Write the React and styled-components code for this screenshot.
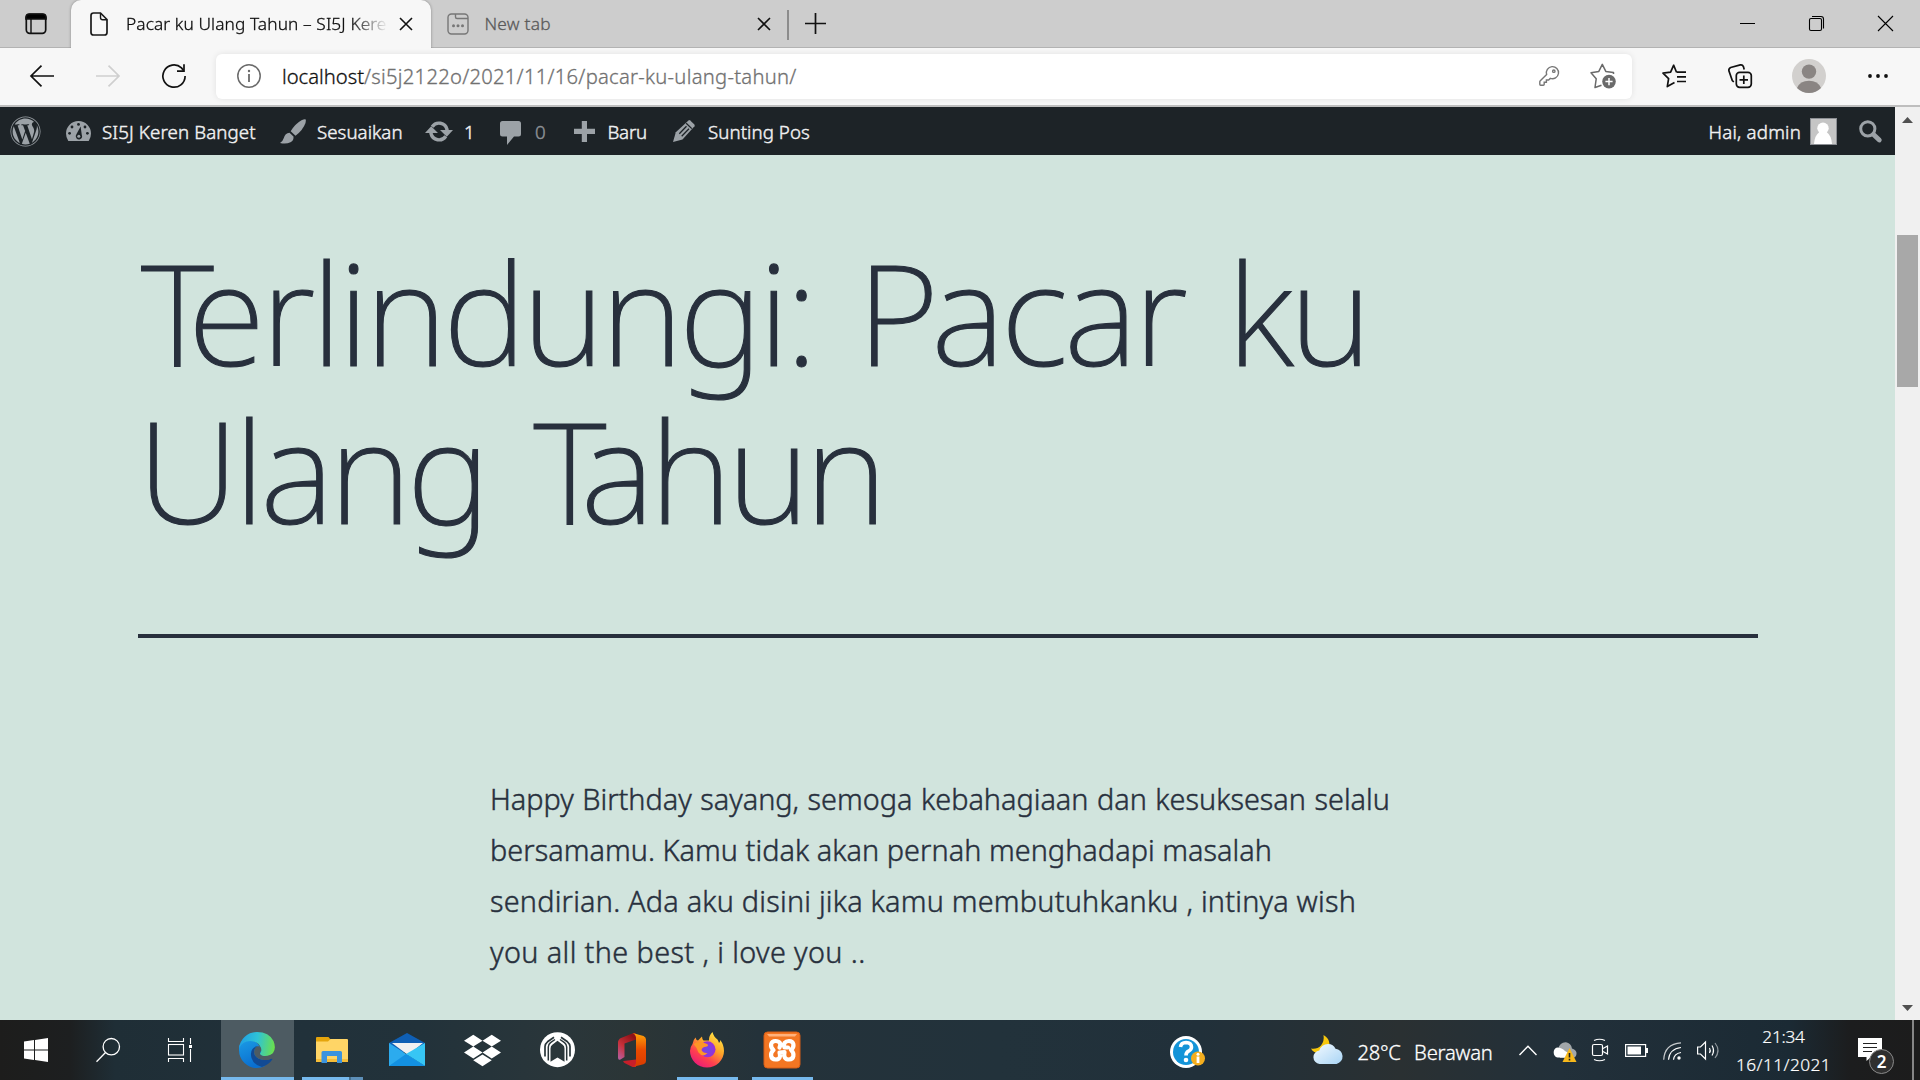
import React from "react";
import styled, { createGlobalStyle } from "styled-components";
import { FaWordpress, FaDropbox } from "react-icons/fa";

const Global = createGlobalStyle`
  * { box-sizing: border-box; }
  html, body { margin: 0; padding: 0; overflow: hidden; }
  body { font-family: "Noto Sans", "Open Sans", sans-serif; font-weight: 300; }
  svg { display: block; flex: none; overflow: visible; }
`;

const Screen = styled.div`
  width: 1920px;
  height: 1080px;
  display: flex;
  flex-direction: column;
  background: #d1e4dd;
`;

const Text = styled.span`
  font-size: ${(p) => p.$size || 17.3}px;
  letter-spacing: ${(p) => p.$ls || 0}px;
  color: ${(p) => p.$color || "inherit"};
  -webkit-text-stroke: ${(p) => p.$stroke ?? 0.3}px currentColor;
  white-space: pre;
`;

/* ---------- browser tabs ---------- */
const TabStrip = styled.div`
  height: 48px;
  display: flex;
  background: #cdcdcd;
  box-shadow: inset 0 -1px 0 #b3b3b3;
`;
const TabActions = styled.div`
  width: 71px;
  padding: 13px 0 0 25px;
`;
const Tab = styled.div`
  width: ${(p) => p.$width}px;
  height: 48px;
  display: flex;
  align-items: center;
  padding: 0 ${(p) => p.$right}px 1px ${(p) => p.$left}px;
  color: ${(p) => (p.$active ? "#0c0c0c" : "#5a5a5a")};
  background: ${(p) => (p.$active ? "#f7f7f7" : "transparent")};
  border-radius: 10px 10px 0 0;
  box-shadow: ${(p) => (p.$active ? "0 0 3px rgba(0,0,0,.35)" : "none")};
`;
const TabTitle = styled.div`
  flex: 1;
  display: flex;
  overflow: hidden;
  margin: 0 14px 0 ${(p) => p.$gap}px;
  mask-image: ${(p) => (p.$fade ? "linear-gradient(90deg, #000 225px, transparent 262px)" : "none")};
`;
const TabDivider = styled.div`
  width: 2px;
  height: 30px;
  margin-top: 10px;
  background: #8c8c8c;
`;
const NewTabButton = styled.div`
  padding: 13px 0 0 16px;
`;
const WindowButtons = styled.div`
  display: flex;
  margin-left: auto;
`;
const WindowButton = styled.div`
  width: 69px;
  height: 47px;
  display: grid;
  place-items: center;
`;

/* ---------- toolbar ---------- */
const Toolbar = styled.div`
  height: 59px;
  display: flex;
  align-items: center;
  padding: 0 9px 2px;
  background: #f7f7f7;
  border-bottom: 2px solid #bebebe;
`;
const ToolSlot = styled.div`
  width: ${(p) => p.$width || 66}px;
  display: grid;
  place-items: center;
`;
const AddressBar = styled.div`
  width: 1416px;
  height: 45px;
  margin: 1px 9px 0;
  display: flex;
  align-items: center;
  padding: 0 16px 0 21px;
  background: #fff;
  border-radius: 6px;
  box-shadow: 0 0 6px rgba(0, 0, 0, 0.09);
`;
const Url = styled.div`
  display: flex;
  margin: 0 auto 0 21px;
`;
const AddressActions = styled.div`
  display: flex;
  align-items: center;
  gap: 31px;
`;

/* ---------- page ---------- */
const Viewport = styled.div`
  height: 913px;
  display: flex;
`;
const Page = styled.div`
  width: 1895px;
  background: #d1e4dd;
`;
const AdminBar = styled.div`
  height: 48px;
  display: flex;
  align-items: center;
  background: #1d2327;
  color: #f0f0f1;
`;
const AdminItem = styled.div`
  width: ${(p) => p.$width}px;
  display: flex;
  align-items: center;
`;
const AdminIcon = styled.div`
  width: ${(p) => p.$width}px;
  display: flex;
  padding: ${(p) => p.$drop || 0}px 0 0 ${(p) => p.$indent || 0}px;
  color: #9ca2a7;
`;
const AdminRight = styled.div`
  display: flex;
  align-items: center;
  margin-left: auto;
`;
const Avatar = styled.div`
  width: 58px;
  padding-left: 9px;
`;
const Article = styled.article`
  width: 1620px;
  margin: 0 auto;
  padding-top: 77px;
  color: #28303d;
`;
const Title = styled.h1`
  margin: 0;
  height: 402px;
  font-size: 141px;
  line-height: 158.4px;
  font-weight: 200;
  -webkit-text-stroke: 1.1px #28303d;
`;
const TitleLine = styled.span`
  display: block;
  white-space: nowrap;
  letter-spacing: ${(p) => p.$ls}px;
  word-spacing: ${(p) => p.$ws}px;
  margin-left: ${(p) => p.$shift}px;
`;
const Kern = styled.span`
  letter-spacing: ${(p) => p.$ls}px;
`;
const Rule = styled.hr`
  height: 4px;
  margin: 0;
  border: 0;
  background: #28303d;
`;
const Paragraph = styled.p`
  width: 915px;
  margin: 135px auto 0;
  font-size: 28.8px;
  line-height: 51px;
  -webkit-text-stroke: 0.45px #28303d;
`;
const ParagraphLine = styled.span`
  display: block;
  white-space: nowrap;
  letter-spacing: ${(p) => p.$ls}px;
  word-spacing: ${(p) => p.$ws || 0}px;
`;
const Scrollbar = styled.div`
  width: 25px;
  display: flex;
  flex-direction: column;
  align-items: center;
  padding: 10px 0 9px;
  background: #f0f0f0;
`;
const Thumb = styled.div`
  width: 21px;
  height: 152px;
  margin: 112px 0 auto;
  background: #a8a8a8;
`;

/* ---------- taskbar ---------- */
const Taskbar = styled.div`
  height: 60px;
  display: flex;
  color: #fff;
  background: linear-gradient(90deg, #1d1d1c 0, #1d1f20 70px, #1f2e36 115px, #21313a 300px, #22323a 420px, #2a363a 560px, #2b3536 640px, #24323a 760px, #22323b 1000px, #21303a 1200px, #2a3032 1400px, #22303a 1560px, #1b2a34 1790px, #1c1d1e 1850px, #1c1c1c 100%);
`;
const SystemSlot = styled.div`
  width: 72px;
  display: grid;
  place-items: center;
`;
const Apps = styled.div`
  display: flex;
  margin-left: 3.5px;
`;
const AppSlot = styled.div`
  width: 75px;
  height: 60px;
  padding: 0 1px;
`;
const AppFace = styled.div`
  height: 60px;
  padding-top: 12px;
  display: flex;
  flex-direction: column;
  align-items: center;
  background: ${(p) => (p.$active ? "#4d5b62" : "transparent")};
`;
const Underline = styled.div`
  width: ${(p) => p.$width}px;
  height: 3px;
  margin-top: 9px;
  background: ${(p) => (p.$stack ? "linear-gradient(90deg,#76b9ed 47px,#46708f 47px,#46708f 49px,#5d8fb8 49px)" : "#76b9ed")};
`;
const Tray = styled.div`
  display: flex;
  margin-left: auto;
  align-items: center;
`;
const TrayHelp = styled.div`
  padding: 4px 105px 0 0;
`;
const Weather = styled.div`
  width: 200px;
  display: flex;
  align-items: center;
  gap: 13.5px;
  padding-top: 3px;
`;
const WeatherIcon = styled.div`
  margin-top: -6px;
`;
const TraySlot = styled.div`
  width: 36px;
  display: grid;
  place-items: center;
  padding-top: ${(p) => p.$drop || 0}px;
`;
const Clock = styled.div`
  width: 115px;
  margin-right: -1px;
  display: flex;
  flex-direction: column;
  align-items: center;
  line-height: 28px;
  padding-top: 1px;
`;
const Notification = styled.div`
  position: relative;
  width: 72px;
  height: 60px;
  padding: 17px 0 0 18px;
`;
const Badge = styled.div`
  position: absolute;
  left: 29px;
  top: 29px;
  width: 25px;
  height: 25px;
  display: grid;
  place-items: center;
  border-radius: 50%;
  border: 1.5px solid #8a8a8a;
  background: #2f2f2f;
  font-size: 17px;
  font-weight: 600;
  line-height: 20px;
`;
const ShowDesktop = styled.div`
  width: 8px;
  height: 60px;
  border-left: 2px solid #868686;
`;

const Svg = ({ w, h, vb, children, ...rest }) => (
  <svg width={w} height={h} viewBox={vb || `0 0 ${w} ${h}`} fill="none" stroke="none" {...rest}>
    {children}
  </svg>
);

const Close = ({ size = 12, width = 1.6, color = "#111" }) => (
  <Svg w={size} h={size} vb="0 0 12 12" stroke={color} strokeWidth={width}>
    <path d="M0 0L12 12M12 0L0 12" />
  </Svg>
);

function Tabs() {
  return (
    <TabStrip>
      <TabActions>
        <Svg w={22} h={22} stroke="#111" strokeWidth="1.7">
          <rect x="1.3" y="1.3" width="19.4" height="19" rx="3.5" />
          <path d="M1 4.5Q1 1 4.5 1H17.5Q21 1 21 4.5V6H1Z" fill="#000" />
          <path d="M6 6V20" strokeWidth="1.4" />
        </Svg>
      </TabActions>
      <Tab $active $width={360} $left={19} $right={19}>
        <Svg w={18} h={24} stroke="#1a1a1a" strokeWidth="1.7">
          <path d="M3.5 1H10.5L17 7.5V20.5Q17 23 14.5 23H3.5Q1 23 1 20.5V3.5Q1 1 3.5 1Z" />
          <path d="M10.5 1V5.5Q10.5 7.7 12.7 7.7H17" strokeWidth="1.4" />
        </Svg>
        <TabTitle $gap={18} $fade>
          <Text $ls={0.1}>Pacar ku Ulang Tahun – SI5J Kere</Text>
        </TabTitle>
        <Close />
      </Tab>
      <Tab $width={356} $left={16} $right={17}>
        <Svg w={22} h={22} stroke="#777" strokeWidth="1.4">
          <rect x="1" y="1" width="20" height="20" rx="3.5" />
          <path d="M8.5 1V4Q8.5 5.5 10 5.5H21" />
          <g fill="#777" stroke="none">
            <circle cx="6.5" cy="12.7" r="1.5" />
            <circle cx="11" cy="12.7" r="1.5" />
            <circle cx="15.5" cy="12.7" r="1.5" />
          </g>
        </Svg>
        <TabTitle $gap={15.5}>
          <Text $ls={0.26}>New tab</Text>
        </TabTitle>
        <Close />
      </Tab>
      <TabDivider />
      <NewTabButton>
        <Svg w={21} h={21} stroke="#111" strokeWidth="1.7">
          <path d="M10.5 0V21M0 10.5H21" />
        </Svg>
      </NewTabButton>
      <WindowButtons>
        <WindowButton>
          <Svg w={15} h={15} stroke="#000" strokeWidth="1">
            <path d="M0 7.5H15" />
          </Svg>
        </WindowButton>
        <WindowButton>
          <Svg w={15} h={15} stroke="#000" strokeWidth="1.1">
            <rect x=".5" y="2.5" width="12" height="12" rx="1.5" />
            <path d="M3 .5H12Q14.5 .5 14.5 3V12.5" />
          </Svg>
        </WindowButton>
        <WindowButton>
          <Close size={15} width={0.9} color="#000" />
        </WindowButton>
      </WindowButtons>
    </TabStrip>
  );
}

function BrowserToolbar() {
  return (
    <Toolbar>
      <ToolSlot>
        <Svg w={24} h={22} stroke="#111" strokeWidth="1.7">
          <path d="M24 11H1M11.5 .7L1 11L11.5 21.3" />
        </Svg>
      </ToolSlot>
      <ToolSlot>
        <Svg w={24} h={22} stroke="#cfcfcf" strokeWidth="1.7">
          <path d="M0 11H23M12.5 .7L23 11L12.5 21.3" />
        </Svg>
      </ToolSlot>
      <ToolSlot>
        <Svg w={24} h={24} stroke="#111" strokeWidth="1.7">
          <path d="M23.1 12A11.1 11.1 0 1 1 19.5 3.900L21.500 6.500" />
          <path d="M22 .2V7.2H15" />
        </Svg>
      </ToolSlot>
      <AddressBar>
        <Svg w={24} h={24} stroke="#6a6a6a" strokeWidth="1.5">
          <circle cx="12" cy="12" r="11.2" />
          <path d="M12 10V18" strokeWidth="1.8" />
          <circle cx="12" cy="7" r="1.2" fill="#6a6a6a" stroke="none" />
        </Svg>
        <Url>
          <Text $size={20.2} $color="#111">localhost</Text>
          <Text $size={20.2} $ls={0.27} $color="#717171">/si5j2122o/2021/11/16/pacar-ku-ulang-tahun/</Text>
        </Url>
        <AddressActions>
          <Svg w={20} h={20} stroke="#767676" strokeWidth="1.4">
            <path d="M7.6 8.5A6.1 6.1 0 1 1 11.3 12.4L9.6 14H7.4V16.3H5.2V18.3Q5.2 19.2 4.3 19.2H1.6Q.8 19.2 .8 18.3V15.8Q.8 15.2 1.3 14.7Z" />
            <circle cx="14.8" cy="5.2" r="1.2" />
          </Svg>
          <Svg w={26} h={26} stroke="#6a6a6a" strokeWidth="1.5" strokeLinejoin="round">
            <path d="M11.5 22.2L5 24.5L6.2 15.8L1 9.8L8.8 8.4L12.3 1.3L15.8 8.4L23.5 9.6V11" />
            <circle cx="19" cy="18.6" r="6.8" fill="#6a6a6a" stroke="none" />
            <path d="M19 15V22.2M15.4 18.6H22.6" stroke="#fff" />
          </Svg>
        </AddressActions>
      </AddressBar>
      <ToolSlot>
        <Svg w={24} h={24} stroke="#111" strokeWidth="1.7" strokeLinejoin="round">
          <path d="M14.5 8.2L11.7 1.2L8.6 8.2L1 9.2L6.6 14.6L5.3 22.6L12.5 18.6" />
          <path d="M14.5 8.2H24M15 12.8H24M15 17.5H24" />
        </Svg>
      </ToolSlot>
      <ToolSlot>
        <Svg w={24} h={24} stroke="#111" strokeWidth="1.7">
          <rect x="8.3" y="8.3" width="15" height="15" rx="3.3" />
          <path d="M15.8 11.5V20M11.5 15.8H20" />
          <path d="M5.8 18L4.3 16.5L.9 6.8Q.5 4.4 2.7 3.5L12.3 .9Q14.6 .5 15.4 2.6L16.2 5.4" />
        </Svg>
      </ToolSlot>
      <ToolSlot $width={72}>
        <Svg w={34} h={34}>
          <circle cx="17" cy="17" r="17" fill="#d2d0ce" />
          <circle cx="17" cy="12.6" r="7.2" fill="#8a8583" />
          <path d="M5 29Q8 21.7 17 21.7T29 29A17 17 0 0 1 5 29Z" fill="#8a8583" />
        </Svg>
      </ToolSlot>
      <ToolSlot>
        <Svg w={20} h={4}>
          <circle cx="2" cy="2" r="1.9" fill="#111" />
          <circle cx="10" cy="2" r="1.9" fill="#111" />
          <circle cx="18" cy="2" r="1.9" fill="#111" />
        </Svg>
      </ToolSlot>
    </Toolbar>
  );
}

const adminText = { $size: 18.7, $stroke: 0.45 };

function WpAdminBar() {
  return (
    <AdminBar>
      <AdminItem $width={66}>
        <AdminIcon $width={66} $indent={10}>
          <FaWordpress size={31} />
        </AdminIcon>
      </AdminItem>
      <AdminItem $width={214}>
        <AdminIcon $width={36}>
          <Svg w={25} h={20}>
            <path fill="currentColor" d="M12.5 0A12.4 12.4 0 0 0 0 12.5Q0 16.7 2.3 20H22.7Q25 16.7 25 12.5A12.4 12.4 0 0 0 12.5 0Z" />
            <g fill="#1d2327">
              <circle cx="12.5" cy="3.4" r="1.4" />
              <circle cx="6" cy="6" r="1.4" />
              <circle cx="19" cy="6" r="1.4" />
              <circle cx="3.6" cy="12.3" r="1.4" />
              <circle cx="21.4" cy="12.3" r="1.4" />
              <path d="M14.6 5.5L15.8 14A3.2 3.2 0 1 1 10.4 13.2Z" />
            </g>
            <circle cx="12.8" cy="15.3" r="1.5" fill="currentColor" />
          </Svg>
        </AdminIcon>
        <Text {...adminText} $ls={0.12}>SI5J Keren Banget</Text>
      </AdminItem>
      <AdminItem $width={145}>
        <AdminIcon $width={37}>
          <Svg w={26} h={25}>
            <path fill="currentColor" d="M25.5 .3Q26.3 1 25.5 4Q23 11 15.5 16.8L10.7 12.3Q15 5 21.5 1.3Q24.5 -.3 25.5 .3Z" />
            <path fill="currentColor" d="M9.5 13.7L13.5 17.5Q14 21.5 10.5 23.3Q6 25.5 0 24Q3 22 3.8 19Q5 14.3 9.5 13.7Z" />
          </Svg>
        </AdminIcon>
        <Text {...adminText} $ls={0.05}>Sesuaikan</Text>
      </AdminItem>
      <AdminItem $width={75}>
        <AdminIcon $width={39}>
          <Svg w={28} h={21} stroke="currentColor" strokeWidth="3.4">
            <path d="M7.2 5.8A8.2 8.2 0 0 1 22 8.5V10" />
            <path d="M20.8 15.2A8.2 8.2 0 0 1 6 12.5V11" />
            <path fill="currentColor" stroke="none" d="M15 9H28L21.8 15.8ZM0 12H13L6.2 5.2Z" />
          </Svg>
        </AdminIcon>
        <Text {...adminText}>1</Text>
      </AdminItem>
      <AdminItem $width={74}>
        <AdminIcon $width={35} $drop={4}>
          <Svg w={21} h={24}>
            <path fill="currentColor" d="M2.5 0H18.5Q21 0 21 2.5V13Q21 15.5 18.5 15.5H14L7 24V15.5H2.5Q0 15.5 0 13V2.5Q0 0 2.5 0Z" />
          </Svg>
        </AdminIcon>
        <Text {...adminText} $color="#8d9196">0</Text>
      </AdminItem>
      <AdminItem $width={99}>
        <AdminIcon $width={33.5}>
          <Svg w={21} h={21}>
            <path fill="currentColor" d="M7.8 0H13V7.8H21V13H13V21H7.8V13H0V7.8H7.8Z" />
          </Svg>
        </AdminIcon>
        <Text {...adminText} $ls={-0.2}>Baru</Text>
      </AdminItem>
      <AdminItem $width={140}>
        <AdminIcon $width={35}>
          <Svg w={22} h={22}>
            <path fill="currentColor" d="M15.5 .4Q16.3 -.2 17.2 .5L21.4 4.6Q22 5.4 21.5 6.3L9.5 19.4L0 22L2.8 12.3Z" />
            <path stroke="#1d2327" strokeWidth="1.3" d="M13.2 3.2L18.8 8.6M6.3 13.8L13.5 6.3M8.7 16.2L16 8.8" />
          </Svg>
        </AdminIcon>
        <Text {...adminText} $ls={0.06}>Sunting Pos</Text>
      </AdminItem>
      <AdminRight>
        <Text {...adminText} $ls={0.2}>Hai, admin</Text>
        <Avatar>
          <Svg w={27} h={27}>
            <rect x=".5" y=".5" width="26" height="26" fill="#c5c5c5" stroke="#8c8f94" />
            <circle cx="13" cy="10.3" r="5.7" fill="#fff" />
            <path fill="#fff" d="M9.5 14H16.5Q21.5 17.5 22 26H4Q4.5 17.5 9.5 14Z" />
          </Svg>
        </Avatar>
        <AdminItem $width={36}>
          <AdminIcon $width={24}>
            <Svg w={24} h={23} stroke="currentColor">
              <circle cx="8.8" cy="8.8" r="7.1" strokeWidth="3" />
              <path d="M14.5 14.5L20.3 20" strokeWidth="4.8" strokeLinecap="round" />
            </Svg>
          </AdminIcon>
        </AdminItem>
      </AdminRight>
    </AdminBar>
  );
}

const EdgeIcon = () => (
  <Svg w={36} h={36}>
    <defs>
      <linearGradient id="edgeTop" x1="0" y1=".4" x2="1" y2=".5">
        <stop offset="0" stopColor="#1f9fe6" />
        <stop offset=".5" stopColor="#2fc3d6" />
        <stop offset="1" stopColor="#6be04c" />
      </linearGradient>
      <linearGradient id="edgeBody" x1="0" y1="0" x2=".4" y2="1">
        <stop offset="0" stopColor="#1b9be5" />
        <stop offset="1" stopColor="#0a6fd0" />
      </linearGradient>
    </defs>
    <path fill="url(#edgeBody)" d="M0 16Q1 8 10 8Q19 8.500 21 16.500L26 34Q22 36 18 36A18 18 0 0 1 0 18Z" />
    <path fill="url(#edgeTop)" d="M0 16.500A18 18 0 0 1 18 0Q30 0 34.500 9Q37.500 16.500 34 21Q31 24.300 25 24Q20.500 23.500 21 21.500Q23 19.500 22 16Q19.500 9.500 11.500 9Q3 9 0 16.500Z" />
    <path fill="#114a94" d="M13.500 17Q11 20 12.500 26Q15 33.500 23 35Q30 32.500 33.300 27.500Q33.500 26.300 32.300 26.700Q28 28.800 23 27.800Q15.500 26 15 20Q15 16.500 18.500 14Q15.500 14.500 13.500 17Z" />
    <path fill="#4d5b62" d="M15 20Q15 15.500 19 14Q22.500 15.500 22 18.500Q20.300 21 21.500 22.700Q24 25 29 24L34 22L33 26.500Q28 28.800 23 27.800Q15.500 26 15 20Z" />
  </Svg>
);
const ExplorerIcon = () => (
  <Svg w={32} h={36}>
    <path fill="#e5a50c" d="M0 6Q0 5 1 5H12.500L15 8V12H0Z" />
    <path fill="#ffd566" d="M0 9.500H12L14.500 7H31Q32 7 32 8V30H0Z" />
    <path fill="#f6bd38" d="M0 27H32V30H0Z" />
    <path fill="#3b93de" d="M7 19H24.500Q26 19 26 20.500V31H21V24H11V31H5.500V20.500Q5.500 19 7 19Z" />
  </Svg>
);
const MailIcon = () => (
  <Svg w={36} h={36}>
    <path fill="#0f5fb4" d="M0 11L18 1L36 11V20H0Z" />
    <path fill="#f1f1f1" d="M3 11H34L19 23Z" />
    <path fill="#2cabee" d="M0 11L36 34H0Z" />
    <path fill="#37c6f4" d="M36 11L17 22L36 34Z" />
    <path fill="#1391e2" d="M0 34L17 22L36 34Z" />
  </Svg>
);
const HomeIcon = () => (
  <Svg w={35} h={36}>
    <circle cx="17.500" cy="17.700" r="17.500" fill="#fff" />
    <path stroke="#2a363a" strokeWidth="1.700" d="M14 5.200L7.500 9.800Q5 11.800 5 14.500V24.500M21 5.200L27.500 9.800Q30 11.800 30 14.500V24.500" />
    <path stroke="#2a363a" strokeWidth="1.500" d="M15 7.500L10.500 10.700Q8.300 12.500 8.300 15V28.500M20 7.500L24.500 10.700Q26.700 12.500 26.700 15V28.500" />
    <path fill="#2a363a" d="M17.500 8.800L22.700 12.700Q24.500 14 24.500 16.500V29.800L17.500 25.500L10.500 29.800V16.500Q10.500 14 12.300 12.700Z" />
  </Svg>
);
const OfficeIcon = () => (
  <Svg w={28} h={36}>
    <defs>
      <linearGradient id="offR" x1="0" y1="0" x2="0" y2="1">
        <stop offset="0" stopColor="#ffa50a" />
        <stop offset=".5" stopColor="#e94a00" />
        <stop offset="1" stopColor="#d83b01" />
      </linearGradient>
      <linearGradient id="offL" x1=".6" y1="0" x2="0" y2="1">
        <stop offset="0" stopColor="#8e1217" />
        <stop offset=".5" stopColor="#c83039" />
        <stop offset="1" stopColor="#b463a8" />
      </linearGradient>
    </defs>
    <path fill="url(#offL)" d="M15.500 1L3 6Q0 7.500 0 10.500V25.500Q0 28.500 2.500 27.500L6.500 25V11.500L18 7.500V1Z" />
    <path fill="#c71f2a" d="M5.500 29L18 27.500V35H14.500L6.500 31Q4.500 29.500 5.500 29Z" />
    <path fill="url(#offR)" d="M14.500 1L25.500 4Q28 5 28 7.500V29Q28 31.500 25.500 32.300L14.500 35Q18 33.500 18 30V5.500Q17.500 2 14.500 1Z" />
  </Svg>
);
const FirefoxIcon = () => (
  <Svg w={34} h={36}>
    <defs>
      <linearGradient id="ff" x1=".85" y1="0" x2=".2" y2="1">
        <stop offset="0" stopColor="#fff14a" />
        <stop offset=".4" stopColor="#ffa328" />
        <stop offset=".7" stopColor="#ff3f4f" />
        <stop offset="1" stopColor="#e5177f" />
      </linearGradient>
      <radialGradient id="ffGlobe">
        <stop offset="0" stopColor="#6a4be8" />
        <stop offset="1" stopColor="#9b2fd6" />
      </radialGradient>
    </defs>
    <path fill="url(#ff)" d="M2.500 12Q3 8 5.500 5.500Q6 8 8 8.500L12 4.500Q12 7 13.500 8.500H19Q18.500 4 22.500 0Q23.500 4.500 27.500 7.500Q28.500 9 29 11Q30.500 9.500 30.300 8Q34 13 34 19A17 16.500 0 0 1 0 19Q0 15 2.500 12Z" />
    <circle cx="17.500" cy="17.300" r="8" fill="url(#ffGlobe)" />
    <path fill="#ff9626" d="M3.500 12Q9 8 17 12Q19.500 13.500 16 14.800Q12 15 11.500 18Q13 21.500 17.500 21Q13 26 8.500 20.500Q7 15.500 3.500 12Z" />
  </Svg>
);
const XamppIcon = () => (
  <Svg w={36} h={36}>
    <rect width="36" height="36" rx="3.500" fill="#f37623" stroke="#d65c16" strokeWidth="1" />
    <path d="M3 2H33L31 4.500H5Z" fill="#ffb27d" />
    <path d="M15.500 15.500C17.500 11.500 15.500 9 11.500 9C6.500 9 5.500 14.500 9.500 18C5.500 21.500 6.500 27.300 11.500 27.500C15.500 27.500 17 25 15.500 20.500L20.500 20C19.500 25 21 27.500 25 27.500C30 27.300 31 21.500 27 18C31 14.500 30 9 25 9C21 9 19 11.500 20.500 15.500H24" stroke="#fff" strokeWidth="4.200" strokeLinecap="round" strokeLinejoin="round" />
  </Svg>
);

const apps = [
  { id: "edge", icon: <EdgeIcon />, active: true, line: 73 },
  { id: "explorer", icon: <ExplorerIcon />, line: 61, stack: true },
  { id: "mail", icon: <MailIcon /> },
  { id: "dropbox", icon: <FaDropbox size={37} color="#fff" /> },
  { id: "home", icon: <HomeIcon /> },
  { id: "office", icon: <OfficeIcon /> },
  { id: "firefox", icon: <FirefoxIcon />, line: 61 },
  { id: "xampp", icon: <XamppIcon />, line: 61 },
];

function WindowsTaskbar() {
  return (
    <Taskbar>
      <SystemSlot>
        <Svg w={24} h={24}>
          <path fill="#fff" d="M0 3.500L10 2V11.500H0ZM11 1.900L24 0V11.500H11ZM0 12.500H10V22L0 20.500ZM11 12.500H24V24L11 22.100Z" />
        </Svg>
      </SystemSlot>
      <SystemSlot>
        <Svg w={24} h={24} stroke="#fff" strokeWidth="1.3">
          <circle cx="15.300" cy="8.700" r="8.200" />
          <path d="M9.500 14.500L.5 23.700" />
        </Svg>
      </SystemSlot>
      <SystemSlot>
        <Svg w={24} h={24} stroke="#fff" strokeWidth="1.1">
          <path d="M.5 0V3.500H15.500V0M.5 24V20.500H15.500V24M22.500 0V6M22.500 11V24" />
          <rect x=".5" y="6.500" width="15" height="10.500" />
          <path fill="#fff" stroke="none" d="M21 7H24V10H21Z" />
        </Svg>
      </SystemSlot>
      <Apps>
        {apps.map((a) => (
          <AppSlot key={a.id}>
            <AppFace $active={a.active}>
              {a.icon}
              {a.line && <Underline $width={a.line} $stack={a.stack} />}
            </AppFace>
          </AppSlot>
        ))}
      </Apps>
      <Tray>
        <TrayHelp>
          <Svg w={35} h={32}>
            <circle cx="16" cy="16" r="16" fill="#fff" />
            <circle cx="16" cy="16" r="13" fill="#1494d8" />
            <path d="M10.500 11Q11 6.500 16 6.500Q21.500 6.800 21.500 11Q21.500 13.500 18.500 15.200Q16 16.500 16 19.500" stroke="#fff" strokeWidth="3.600" />
            <circle cx="16" cy="24" r="2.300" fill="#fff" />
            <circle cx="28" cy="22.500" r="7" fill="#f4ae1e" />
            <path d="M28 20.500V27" stroke="#fff" strokeWidth="2.800" />
            <circle cx="28" cy="18.200" r="1.500" fill="#fff" />
          </Svg>
        </TrayHelp>
        <Weather>
          <WeatherIcon>
            <Svg w={34} h={30}>
              <defs>
                <linearGradient id="cloud" x1="0" y1="0" x2="1" y2="1">
                  <stop offset="0" stopColor="#f4faff" />
                  <stop offset="1" stopColor="#a8d4f5" />
                </linearGradient>
              </defs>
              <path fill="#f7c70d" d="M13.500 1Q19 4 19.500 10Q19 18 10 19Q3 19 1 14.500Q7 15.500 11 11.500Q14.500 7 13.500 1Z" />
              <path fill="url(#cloud)" d="M9.500 30A6.800 6.800 0 0 1 9.300 16.500Q11.500 10 18 10Q23.500 10 25.500 14.800A7.700 7.700 0 0 1 26.500 30Z" />
            </Svg>
          </WeatherIcon>
          <Text $size={20.2} $ls={-0.3}>28°C</Text>
          <Text $size={20.2} $ls={-0.2}>Berawan</Text>
        </Weather>
        <TraySlot>
          <Svg w={18} h={11} stroke="#fff" strokeWidth="1.4">
            <path d="M.5 10L9 1.200L17.500 10" />
          </Svg>
        </TraySlot>
        <TraySlot $drop={4}>
          <Svg w={25} h={20}>
            <path fill="#a2a7aa" d="M6 7Q8 0 14 .3Q19 1 20 6.500Q25 8 24.500 12Q24 16 20 16H8Z" />
            <path fill="#fff" d="M5.500 15.500A5.300 5.300 0 0 1 5 5.500Q10 5.500 13 9L20 13V15.500Z" />
            <path fill="#f8b91b" d="M17.500 6L24.500 20H10.500Z" />
            <path stroke="#222" strokeWidth="1.600" d="M17.500 11V15.500M17.500 16.800V18.400" />
          </Svg>
        </TraySlot>
        <TraySlot>
          <Svg w={16} h={22} stroke="#fff" strokeWidth="1.200">
            <rect x=".5" y="5.500" width="10" height="11" rx="1.500" />
            <path d="M11 9.500L15.500 7V15L11 12.500M2 1.500Q7.500 -1 13 1.500M2 20.500Q7.500 23 13 20.500" />
          </Svg>
        </TraySlot>
        <TraySlot>
          <Svg w={23} h={13} stroke="#fff" strokeWidth="1.200">
            <rect x=".6" y=".6" width="20" height="11.800" />
            <path fill="#fff" stroke="none" d="M2.500 2.500H16V10.500H2.500ZM21 4H23V9H21Z" />
          </Svg>
        </TraySlot>
        <TraySlot $drop={2}>
          <Svg w={18} h={18} stroke="#fff" strokeWidth="1.200">
            <circle cx="16" cy="16" r="1.700" fill="#fff" stroke="none" />
            <path d="M10.500 17.800Q11 11.500 18 10.500M5.500 17.800Q6.500 6.800 18 5.500" />
            <path d="M.7 17.800Q1.500 1.800 18 .8" opacity=".75" />
          </Svg>
        </TraySlot>
        <TraySlot>
          <Svg w={22} h={19} stroke="#fff" strokeWidth="1.200">
            <path d="M.6 6H3.500L8.500 1V18L3.500 13H.6Z" />
            <path d="M12.500 7Q14 9.500 12.500 12M15 4.500Q18 9.500 15 14.500" />
            <path d="M18 2Q24 9.500 18 17" opacity=".5" />
          </Svg>
        </TraySlot>
        <Clock>
          <Text $ls={-0.25} $stroke={0.2}>21:34</Text>
          <Text $ls={0.4} $stroke={0.2}>16/11/2021</Text>
        </Clock>
        <Notification>
          <Svg w={24} h={24}>
            <path fill="#fff" d="M0 1H24V20H13L8.500 24V20H0Z" />
            <path stroke="#222" strokeWidth="1.200" d="M5 6.500H19M5 10.500H19M5 14.500H14" />
          </Svg>
          <Badge>2</Badge>
        </Notification>
        <ShowDesktop />
      </Tray>
    </Taskbar>
  );
}

export default function App() {
  return (
    <Screen>
      <Global />
      <Tabs />
      <BrowserToolbar />
      <Viewport>
        <Page>
          <WpAdminBar />
          <Article>
            <Title>
              <TitleLine $ls={-3.8} $ws={10.5} $shift={3.5}>
                <Kern $ls={-25.5}>T</Kern>erlindungi: <Kern $ls={-7.8}>P</Kern>acar ku
              </TitleLine>
              <TitleLine $ls={-4.4} $ws={15.5} $shift={0}>
                Ulang <Kern $ls={-25.5}>T</Kern>ahun
              </TitleLine>
            </Title>
            <Rule />
            <Paragraph>
              <ParagraphLine $ls={0.01} $ws={1}>Happy Birthday sayang, semoga kebahagiaan dan kesuksesan selalu</ParagraphLine>
              <ParagraphLine $ls={0.05}>bersamamu. Kamu tidak akan pernah menghadapi masalah</ParagraphLine>
              <ParagraphLine $ls={0.22}>sendirian. Ada aku disini jika kamu membutuhkanku , intinya wish</ParagraphLine>
              <ParagraphLine $ls={0.39}>you all the best , i love you ..</ParagraphLine>
            </Paragraph>
          </Article>
        </Page>
        <Scrollbar>
          <Svg w={11} h={6}>
            <path fill="#505050" d="M0 6L5.500 0L11 6Z" />
          </Svg>
          <Thumb />
          <Svg w={11} h={6}>
            <path fill="#505050" d="M0 0H11L5.500 6Z" />
          </Svg>
        </Scrollbar>
      </Viewport>
      <WindowsTaskbar />
    </Screen>
  );
}
